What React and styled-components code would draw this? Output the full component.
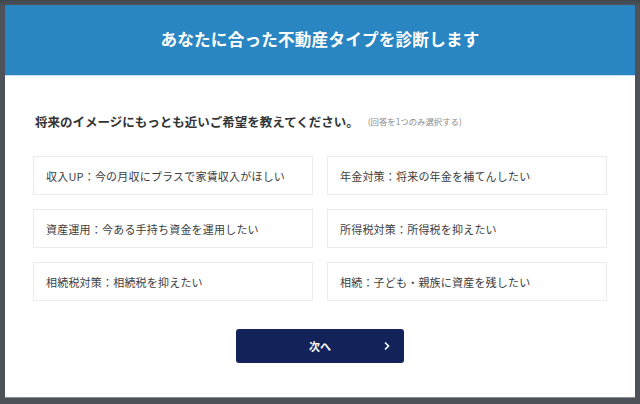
import styled, { createGlobalStyle } from "styled-components";

const GlobalStyle = createGlobalStyle`
    html, body {
        margin: 0;
        padding: 0;
        background: #4d5258;
    }
    body {
        font-family: "Noto Sans CJK JP", "Noto Sans", sans-serif;
    }
`;

const options = [
    "収入UP：今の月収にプラスで家賃収入がほしい",
    "年金対策：将来の年金を補てんしたい",
    "資産運用：今ある手持ち資金を運用したい",
    "所得税対策：所得税を抑えたい",
    "相続税対策：相続税を抑えたい",
    "相続：子ども・親族に資産を残したい",
];

export default function App() {
    return (
        <Page>
            <GlobalStyle />
            <Modal>
                <Header>あなたに合った不動産タイプを診断します</Header>
                <Body>
                    <Question>
                        将来のイメージにもっとも近いご希望を教えてください。
                        <Note>(回答を1つのみ選択する)</Note>
                    </Question>
                    <OptionGrid>
                        {options.map((text) => (
                            <OptionCard key={text}>{text}</OptionCard>
                        ))}
                    </OptionGrid>
                    <NextButton>
                        次へ
                        <Chevron viewBox="0 0 8 10">
                            <path d="M2 1.5 L5.5 5 L2 8.5" />
                        </Chevron>
                    </NextButton>
                </Body>
            </Modal>
        </Page>
    );
}

const Page = styled.div`
    width: 640px;
    height: 404px;
    padding: 5px;
    box-sizing: border-box;
    background: linear-gradient(180deg, #414850 0, #4d5258 6px);
`;
const Modal = styled.div`
    width: 630px;
    height: 392px;
    background: #ffffff;
    display: flex;
    flex-direction: column;
    box-shadow: 0 1px 0 #8d9196;
`;
const Header = styled.div`
    height: 71px;
    background: #2a86c2;
    display: flex;
    align-items: center;
    justify-content: center;
    color: #ffffff;
    font-size: 16.6px;
    font-weight: 700;
    letter-spacing: 0.2px;
    padding-bottom: 3px;
    box-sizing: border-box;
    border-bottom: 1px solid #c9dff0;
`;
const Body = styled.div`
    flex: 1;
    padding: 35px 28px 0;
    display: flex;
    flex-direction: column;
`;
const Question = styled.div`
    margin: 0 2px;
    height: 20px;
    display: flex;
    align-items: center;
    font-size: 12.5px;
    font-weight: 700;
    color: #333333;
`;
const Note = styled.span`
    margin-left: 9px;
    font-size: 8.4px;
    font-weight: 400;
    color: #8a8a8a;
`;
const OptionGrid = styled.div`
    margin-top: 25px;
    display: grid;
    grid-template-columns: 280px 280px;
    column-gap: 14px;
    row-gap: 14px;
`;
const OptionCard = styled.div`
    height: 39px;
    box-sizing: border-box;
    border: 1px solid #ececec;
    display: flex;
    align-items: center;
    padding-left: 12px;
    font-size: 11px;
    letter-spacing: 0.2px;
    color: #3d3d3d;
`;
const NextButton = styled.button`
    position: relative;
    align-self: center;
    margin-top: 28px;
    width: 168px;
    height: 34px;
    border: none;
    border-radius: 3px;
    background: #13235a;
    color: #ffffff;
    font-family: "Noto Sans CJK JP", sans-serif;
    font-size: 11px;
    font-weight: 700;
    display: flex;
    align-items: center;
    justify-content: center;
    padding: 0;
`;
const Chevron = styled.svg`
    position: absolute;
    right: 13px;
    top: 12px;
    width: 8px;
    height: 10px;
    fill: none;
    stroke: #ffffff;
    stroke-width: 1.6;
`;
